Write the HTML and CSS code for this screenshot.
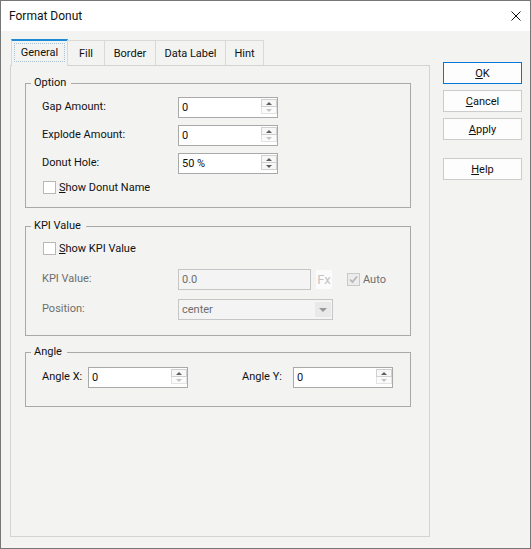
FILE: index.html
```html
<!DOCTYPE html>
<html>
<head>
<meta charset="utf-8">
<link rel="stylesheet" href="styles.css">
</head>
<body>
<div class="window">
  <div class="titlebar">
    <span class="title">Format Donut</span>
    <svg class="close" width="10" height="10" viewBox="0 0 10 10"><path d="M0.5 0.5L9.5 9.5M9.5 0.5L0.5 9.5" stroke="#111" stroke-width="1" fill="none"/></svg>
  </div>
  <div class="client">
    <div class="tabs-col">
      <div class="tabstrip">
        <div class="tab active t-general"><span class="focus">General</span></div>
        <div class="tab t-fill">Fill</div>
        <div class="tab t-border">Border</div>
        <div class="tab t-data">Data Label</div>
        <div class="tab t-hint">Hint</div>
      </div>
      <div class="panel">
        <fieldset class="group g-option">
          <legend>Option</legend>
          <div class="stack">
            <div class="row">
              <span class="lbl w136">Gap Amount:</span>
              <div class="spin w100"><span class="val">0</span><span class="arrows"><span class="ab"><i class="up"></i></span><span class="ab dis"><i class="dn"></i></span></span></div>
            </div>
            <div class="row">
              <span class="lbl w136">Explode Amount:</span>
              <div class="spin w100"><span class="val">0</span><span class="arrows"><span class="ab"><i class="up"></i></span><span class="ab dis"><i class="dn"></i></span></span></div>
            </div>
            <div class="row">
              <span class="lbl w136">Donut Hole:</span>
              <div class="spin w100"><span class="val">50 %</span><span class="arrows"><span class="ab"><i class="up"></i></span><span class="ab"><i class="dn"></i></span></span></div>
            </div>
            <div class="chkrow">
              <span class="cb"></span><span class="cbtext"><u>S</u>how Donut Name</span>
            </div>
          </div>
        </fieldset>

        <fieldset class="group g-kpi">
          <legend>KPI Value</legend>
          <div class="stack2">
            <div class="chkrow">
              <span class="cb"></span><span class="cbtext"><u>S</u>how KPI Value</span>
            </div>
            <div class="row r-kpi">
              <span class="lbl w136 gray">KPI Value:</span>
              <div class="tbox dis">0.0</div>
              <span class="fx">Fx</span>
              <span class="cb cb-dis"><svg width="11" height="11" viewBox="0 0 11 11"><polyline points="2,5.5 4.5,8 9,2.5" fill="none" stroke="#b4b4b4" stroke-width="1.6"/></svg></span>
              <span class="auto">Auto</span>
            </div>
            <div class="row r-pos">
              <span class="lbl w136 gray">Position:</span>
              <div class="select dis"><span class="val">center</span><span class="dd"><i class="ddarrow"></i></span></div>
            </div>
          </div>
        </fieldset>

        <fieldset class="group g-angle">
          <legend>Angle</legend>
          <div class="stack">
            <div class="row">
              <span class="lbl w46">Angle X:</span>
              <div class="spin w100"><span class="val">0</span><span class="arrows"><span class="ab"><i class="up"></i></span><span class="ab dis"><i class="dn"></i></span></span></div>
              <span class="lbl w51 ml54">Angle Y:</span>
              <div class="spin w100"><span class="val">0</span><span class="arrows"><span class="ab"><i class="up"></i></span><span class="ab dis"><i class="dn"></i></span></span></div>
            </div>
          </div>
        </fieldset>
      </div>
    </div>
    <div class="btns">
      <div class="btn default"><span><u>O</u>K</span></div>
      <div class="btn"><span><u>C</u>ancel</span></div>
      <div class="btn"><span><u>A</u>pply</span></div>
      <div class="btn help"><span><u>H</u>elp</span></div>
    </div>
  </div>
</div>
</body>
</html>
```

FILE: styles.css
```css
html, body {
  margin: 0;
  padding: 0;
  background: #f3f4f1;
}

.window {
  width: 531px;
  height: 549px;
  box-sizing: border-box;
  border: 1px solid #777777;
  background: #f3f4f1;
  font-family: Roboto, "Liberation Sans", sans-serif;
  font-size: 11px;
  color: #111;
  display: flex;
  flex-direction: column;
}

.titlebar {
  height: 30px;
  flex: none;
  background: #ffffff;
  display: flex;
  align-items: center;
  justify-content: space-between;
  padding: 0 9px 0 8px;
  font-size: 12px;
}

.close {
  display: block;
}

.client {
  flex: 1;
  display: flex;
  align-items: flex-start;
  padding: 8px 0 0 9px;
}

.tabs-col {
  width: 420px;
  flex: none;
}

.tabstrip {
  display: flex;
  align-items: flex-end;
  height: 26px;
  padding-left: 1px;
  position: relative;
  z-index: 1;
}

.tab {
  height: 25px;
  box-sizing: border-box;
  border: 1px solid #d9d9d9;
  border-bottom: none;
  margin-left: -1px;
  display: flex;
  align-items: center;
  justify-content: center;
  background: #f3f4f1;
}

.tab:first-child {
  margin-left: 0;
}

.tab.active {
  height: 27px;
  margin-bottom: -1px;
  border-top: 2px solid #1d8ad8;
  padding-bottom: 3px;
}

.focus {
  border: 1px dotted #a9c1d4;
  padding: 2px 6px;
  line-height: 13px;
}

.t-general { width: 57px; }
.t-fill { width: 38px; }
.t-border { width: 52px; }
.t-data { width: 71px; }
.t-hint { width: 39px; }

.panel {
  height: 472px;
  box-sizing: border-box;
  border: 1px solid #d3d3d3;
  padding: 10px 0 0 14px;
}

.group {
  width: 386px;
  box-sizing: border-box;
  margin: 0;
  border: 1px solid #a9a9a9;
  padding: 7px 0 13px 0;
  min-inline-size: 0;
}

.group legend {
  padding: 0 5px 0 3px;
  margin-left: 5px;
  line-height: 14px;
  height: 14px;
}

.g-kpi {
  margin-top: 11px;
  padding: 9px 0 15px 0;
}

.g-angle {
  margin-top: 9px;
  padding: 8px 0 18px 0;
}

.stack {
  display: flex;
  flex-direction: column;
  gap: 7px;
  margin-left: 16px;
}

.stack2 {
  display: flex;
  flex-direction: column;
  margin-left: 16px;
}

.r-kpi { margin-top: 14px; }
.r-pos { margin-top: 9px; }

.row {
  display: flex;
  align-items: center;
  height: 21px;
}

.lbl {
  flex: none;
  position: relative;
  top: -1px;
}

.w136 { width: 136px; }
.w46 { width: 46px; }
.w51 { width: 51px; }
.ml54 { margin-left: 54px; }
.w100 { width: 100px; }

.gray { color: #6d6d6d; }

.spin {
  height: 21px;
  box-sizing: border-box;
  border: 1px solid #a9a9a9;
  background: #ffffff;
  display: flex;
  flex: none;
}

.val {
  flex: 1;
  padding-left: 3px;
  line-height: 19px;
}

.arrows {
  width: 16px;
  display: flex;
  flex-direction: column;
  margin: 1px 0 3px 0;
}

.ab {
  flex: 1;
  box-sizing: border-box;
  border: 1px solid #d0d0d0;
  background: #f7f7f7;
  display: flex;
  align-items: center;
  justify-content: center;
}

.ab + .ab {
  border-top: none;
}

.ab.dis {
  border-color: #e3e3e3;
  background: #fbfbfb;
}

.up {
  width: 0;
  height: 0;
  border-left: 3px solid transparent;
  border-right: 3px solid transparent;
  border-bottom: 3px solid #5f5f5f;
}

.dn {
  width: 0;
  height: 0;
  border-left: 3px solid transparent;
  border-right: 3px solid transparent;
  border-top: 3px solid #5f5f5f;
}

.ab.dis .dn {
  border-top-color: #c4c4c4;
}

.chkrow {
  display: flex;
  align-items: center;
  height: 13px;
}

.cb {
  width: 13px;
  height: 13px;
  box-sizing: border-box;
  border: 1px solid #b8b8b8;
  background: #ffffff;
  margin-left: 1px;
  flex: none;
  display: flex;
  align-items: center;
  justify-content: center;
}

.cbtext {
  margin-left: 3px;
}

.tbox {
  width: 133px;
  height: 21px;
  box-sizing: border-box;
  border: 1px solid #c6c6c6;
  background: #f4f4f4;
  color: #6d6d6d;
  padding-left: 3px;
  line-height: 19px;
  flex: none;
}

.fx {
  margin-left: 5px;
  width: 16px;
  height: 19px;
  background: #fbfbfb;
  color: #c4c4c4;
  font-size: 13px;
  display: flex;
  align-items: center;
  justify-content: center;
  flex: none;
}

.cb-dis {
  margin-left: 15px;
  border-color: #c9c9c9;
  background: #ececec;
}

.auto {
  margin-left: 3px;
  color: #6d6d6d;
}

.select {
  width: 155px;
  height: 21px;
  box-sizing: border-box;
  border: 1px solid #c6c6c6;
  background: #f4f4f4;
  color: #6d6d6d;
  display: flex;
  flex: none;
}

.dd {
  width: 16px;
  margin: 2px 1px 2px 0;
  background: #e9e9e9;
  display: flex;
  align-items: center;
  justify-content: center;
}

.ddarrow {
  width: 0;
  height: 0;
  border-left: 4px solid transparent;
  border-right: 4px solid transparent;
  border-top: 4px solid #999999;
}

.btns {
  display: flex;
  flex-direction: column;
  gap: 6px;
  margin: 23px 0 0 13px;
}

.btn {
  width: 79px;
  height: 22px;
  box-sizing: border-box;
  border: 1px solid #cccccc;
  background: #fdfdfd;
  display: flex;
  align-items: center;
  justify-content: center;
}

.btn.default {
  border-color: #0078d7;
}

.btn.help {
  margin-top: 12px;
}
```
